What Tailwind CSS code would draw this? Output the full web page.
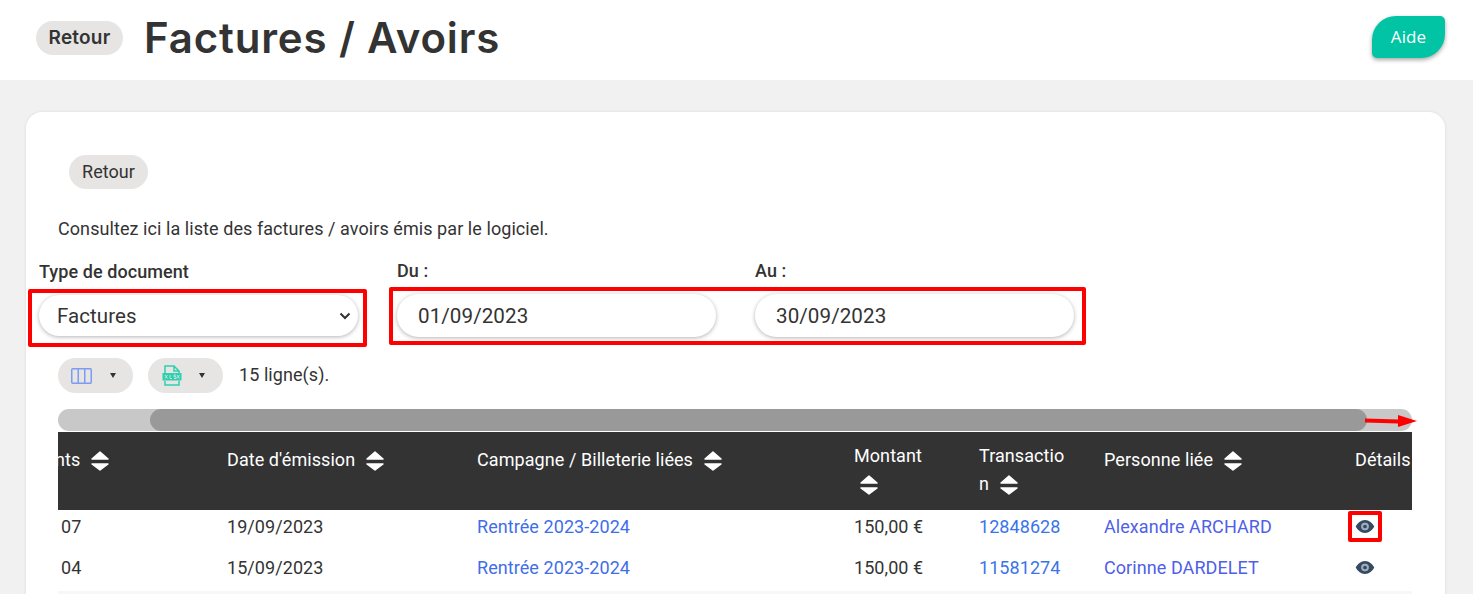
<!DOCTYPE html>
<html lang="fr">
<head>
    <meta charset="UTF-8">
    <meta name="viewport" content="width=device-width, initial-scale=1.0">
    <title>Factures / Avoirs</title>
    <script src="https://cdn.jsdelivr.net/npm/@tailwindcss/browser@4"></script>
</head>
<body class="relative h-[594px] overflow-hidden bg-[#f1f1f1] font-['Roboto',sans-serif] text-[18px] tracking-[0.07px] text-[#333]">
    <!-- Header -->
    <div class="flex h-[80px] items-center bg-white pb-[4px] pl-[36px] pr-[28px]">
        <button class="flex h-[34px] w-[87px] items-center justify-center rounded-full bg-[#e7e5e4] pt-[1px] font-['Inter',sans-serif] text-[19px] font-semibold tracking-[0.2px]">Retour</button>
        <h1 class="ml-[21px] font-['Inter',sans-serif] text-[42px] font-semibold leading-none tracking-[0.85px] text-[#333]">Factures / Avoirs</h1>
        <button class="ml-auto flex h-[42px] w-[73px] -translate-y-[1px] items-center justify-center rounded-[24px_5px_24px_5px] bg-[#00c4a3] font-['Open_Sans',sans-serif] text-[17px] text-white shadow-[0_2px_4px_rgba(0,0,0,0.35)]">Aide</button>
    </div>

    <!-- Carte -->
    <div class="ml-[26px] mr-[28px] mt-[32px] h-[600px] rounded-[16px] bg-white px-[32px] pt-[43px] shadow-[0_0_3px_rgba(0,0,0,0.1)]">
        <button class="ml-[11px] flex h-[34px] w-[79px] items-center justify-center rounded-full bg-[#e7e5e4] pb-[2px]">Retour</button>
        <p class="mt-[28px] leading-[24px]">Consultez ici la liste des factures / avoirs émis par le logiciel.</p>

        <!-- Filtres -->
        <div class="ml-[-19px] mt-[18px] flex gap-[39px]">
            <div class="w-[319px] pt-[1px]">
                <label class="block font-medium leading-[24px]">Type de document</label>
                <div class="relative mt-[11px]">
                    <select class="h-[41px] w-full appearance-none rounded-full bg-white pl-[18px] pt-[2px] text-[20.5px] shadow-[0_1px_4px_rgba(0,0,0,0.3)]">
                        <option>Factures</option>
                    </select>
                    <svg class="absolute right-[7px] top-[16px] h-[10px] w-[12px]" viewBox="0 0 12 10" fill="none" stroke="#333" stroke-width="2"><path d="M1.5 2.5 6 7l4.5-4.5"/></svg>
                </div>
            </div>
            <div class="w-[319px]">
                <label class="block font-medium leading-[24px]">Du :</label>
                <input class="mt-[11px] h-[43px] w-full rounded-full bg-white pl-[21px] text-[20.6px] shadow-[0_1px_4px_rgba(0,0,0,0.3)]" value="01/09/2023">
            </div>
            <div class="w-[319px]">
                <label class="block font-medium leading-[24px]">Au :</label>
                <input class="mt-[11px] h-[43px] w-full rounded-full bg-white pl-[21px] text-[20.6px] shadow-[0_1px_4px_rgba(0,0,0,0.3)]" value="30/09/2023">
            </div>
        </div>

        <!-- Barre d'outils -->
        <div class="mt-[21px] flex h-[35px] items-center">
            <button class="flex h-[35px] w-[75px] items-center rounded-full bg-[#e7e5e4] pl-[13px]">
                <svg class="h-[16px] w-[21px]" viewBox="0 0 21 16" fill="none" stroke="#7b9cf0" stroke-width="1.5"><rect x="0.75" y="0.75" width="19.5" height="14.5" rx="1"/><path d="M7.25 1v14M13.75 1v14"/></svg>
                <span class="ml-[18px] h-0 w-0 border-x-[3px] border-t-[5px] border-x-transparent border-t-[#333]"></span>
            </button>
            <button class="ml-[15px] flex h-[35px] w-[75px] items-center rounded-full bg-[#e7e5e4] pl-[14px]">
                <svg class="h-[21px] w-[20px]" viewBox="0 0 20 21" fill="none" stroke="#2fd0ae" stroke-width="1.5"><path d="M3 8V1h9l5 5v2M3 16v4h14v-4M12 1v5h5"/><rect x="0.5" y="8" width="19" height="7.5" fill="#2fd0ae" stroke="none"/><path d="M3 10l2.5 3.5M5.5 10 3 13.500M8 10v3.500h2M15 10l2.500 3.500M17.500 10 15 13.500M14 10h-2v1.700h2v1.800h-2" stroke="#e7e5e4" stroke-width="0.8"/></svg>
                <span class="ml-[17px] h-0 w-0 border-x-[3px] border-t-[5px] border-x-transparent border-t-[#333]"></span>
            </button>
            <span class="ml-[16px] -translate-y-[1px]">15 ligne(s).</span>
        </div>

        <!-- Barre de défilement -->
        <div class="mt-[16px] h-[22px] w-[1354px] rounded-full bg-[#c8c8c8] pl-[92px]">
            <div class="h-full w-[1217px] rounded-full bg-[#999]"></div>
        </div>

        <!-- Tableau -->
        <div class="mt-[1px] w-[1354px] overflow-hidden">
            <div class="grid h-[78px] grid-cols-[166px_250px_377px_125px_125px_251px_60px] bg-[#333] text-white">
                <div class="ml-[-3px] pt-[16px] leading-[24px]">nts <svg class="ml-[6px] inline-block h-[20px] w-[18px] align-[-5px]" viewBox="0 0 18 20" fill="#fff" stroke="#fff" stroke-width="1.500" stroke-linejoin="round"><path d="M9 1 17 8H1zM1 13h16l-8 6z"/></svg></div>
                <div class="pl-[3px] pt-[16px] leading-[24px]">Date d'émission <svg class="ml-[6px] inline-block h-[20px] w-[18px] align-[-5px]" viewBox="0 0 18 20" fill="#fff" stroke="#fff" stroke-width="1.500" stroke-linejoin="round"><path d="M9 1 17 8H1zM1 13h16l-8 6z"/></svg></div>
                <div class="pl-[3px] pt-[16px] leading-[24px]">Campagne / Billeterie liées <svg class="ml-[6px] inline-block h-[20px] w-[18px] align-[-5px]" viewBox="0 0 18 20" fill="#fff" stroke="#fff" stroke-width="1.500" stroke-linejoin="round"><path d="M9 1 17 8H1zM1 13h16l-8 6z"/></svg></div>
                <div class="pl-[3px] pr-[30px] pt-[10px] leading-[28px]">Montant <svg class="ml-[6px] inline-block h-[20px] w-[18px] align-[-5px]" viewBox="0 0 18 20" fill="#fff" stroke="#fff" stroke-width="1.500" stroke-linejoin="round"><path d="M9 1 17 8H1zM1 13h16l-8 6z"/></svg></div>
                <div class="break-all pl-[3px] pr-[34px] pt-[10px] leading-[28px]">Transaction <svg class="ml-[6px] inline-block h-[20px] w-[18px] align-[-5px]" viewBox="0 0 18 20" fill="#fff" stroke="#fff" stroke-width="1.500" stroke-linejoin="round"><path d="M9 1 17 8H1zM1 13h16l-8 6z"/></svg></div>
                <div class="pl-[3px] pt-[16px] leading-[24px]">Personne liée <svg class="ml-[6px] inline-block h-[20px] w-[18px] align-[-5px]" viewBox="0 0 18 20" fill="#fff" stroke="#fff" stroke-width="1.500" stroke-linejoin="round"><path d="M9 1 17 8H1zM1 13h16l-8 6z"/></svg></div>
                <div class="pl-[3px] pt-[16px] leading-[24px]">Détails</div>
            </div>
            <div class="grid h-[41px] grid-cols-[166px_250px_377px_125px_125px_251px_60px] items-start pt-[5px] leading-[24px]">
                <div class="pl-[3px]">07</div>
                <div class="pl-[3px]">19/09/2023</div>
                <a class="pl-[3px] text-[#3f6ee8]">Rentrée 2023-2024</a>
                <div class="pl-[3px]">150,00 €</div>
                <a class="pl-[3px] text-[#3b74ea]">12848628</a>
                <a class="pl-[3px] text-[#4f5fe8]">Alexandre ARCHARD</a>
                <div class="pl-[3px] pt-[5px]"><svg class="h-[13px] w-[20px]" viewBox="0 0 20 14" fill="#344a63"><path fill-rule="evenodd" d="M10 0c4.500 0 8 3.500 10 7-2 3.500-5.500 7-10 7S2 10.500 0 7c2-3.500 5.500-7 10-7zm0 3a4 4 0 1 0 0 8 4 4 0 0 0 0-8zm0 2a2 2 0 1 1 0 4 2 2 0 0 1 0-4z"/><circle cx="10" cy="7" r="4" fill="#344a63" opacity="0.45"/></svg></div>
            </div>
            <div class="grid h-[40px] grid-cols-[166px_250px_377px_125px_125px_251px_60px] items-start pt-[5px] leading-[24px]">
                <div class="pl-[3px]">04</div>
                <div class="pl-[3px]">15/09/2023</div>
                <a class="pl-[3px] text-[#3f6ee8]">Rentrée 2023-2024</a>
                <div class="pl-[3px]">150,00 €</div>
                <a class="pl-[3px] text-[#3b74ea]">11581274</a>
                <a class="pl-[3px] text-[#4f5fe8]">Corinne DARDELET</a>
                <div class="pl-[3px] pt-[5px]"><svg class="h-[13px] w-[20px]" viewBox="0 0 20 14" fill="#344a63"><path fill-rule="evenodd" d="M10 0c4.500 0 8 3.500 10 7-2 3.500-5.500 7-10 7S2 10.500 0 7c2-3.500 5.500-7 10-7zm0 3a4 4 0 1 0 0 8 4 4 0 0 0 0-8zm0 2a2 2 0 1 1 0 4 2 2 0 0 1 0-4z"/><circle cx="10" cy="7" r="4" fill="#344a63" opacity="0.45"/></svg></div>
            </div>
            <div class="h-[10px] bg-[#f5f8fb]"></div>
        </div>
    </div>

    <!-- Annotations -->
    <div class="absolute left-[28px] top-[289px] h-[58px] w-[339px] rounded-[2px] border-[4px] border-[#f00]"></div>
    <div class="absolute left-[389px] top-[287px] h-[58px] w-[697px] rounded-[2px] border-[4px] border-[#f00]"></div>
    <div class="absolute left-[1348px] top-[511px] h-[31px] w-[34px] rounded-[2px] border-[4px] border-[#f00]"></div>
    <svg class="absolute left-[1365px] top-[414px] h-[14px] w-[53px]" viewBox="0 0 53 14" fill="#f00"><path d="M0 4.500 33 5.500V1l19 6-19 6V9.500L0 8.500z"/></svg>
</body>
</html>
